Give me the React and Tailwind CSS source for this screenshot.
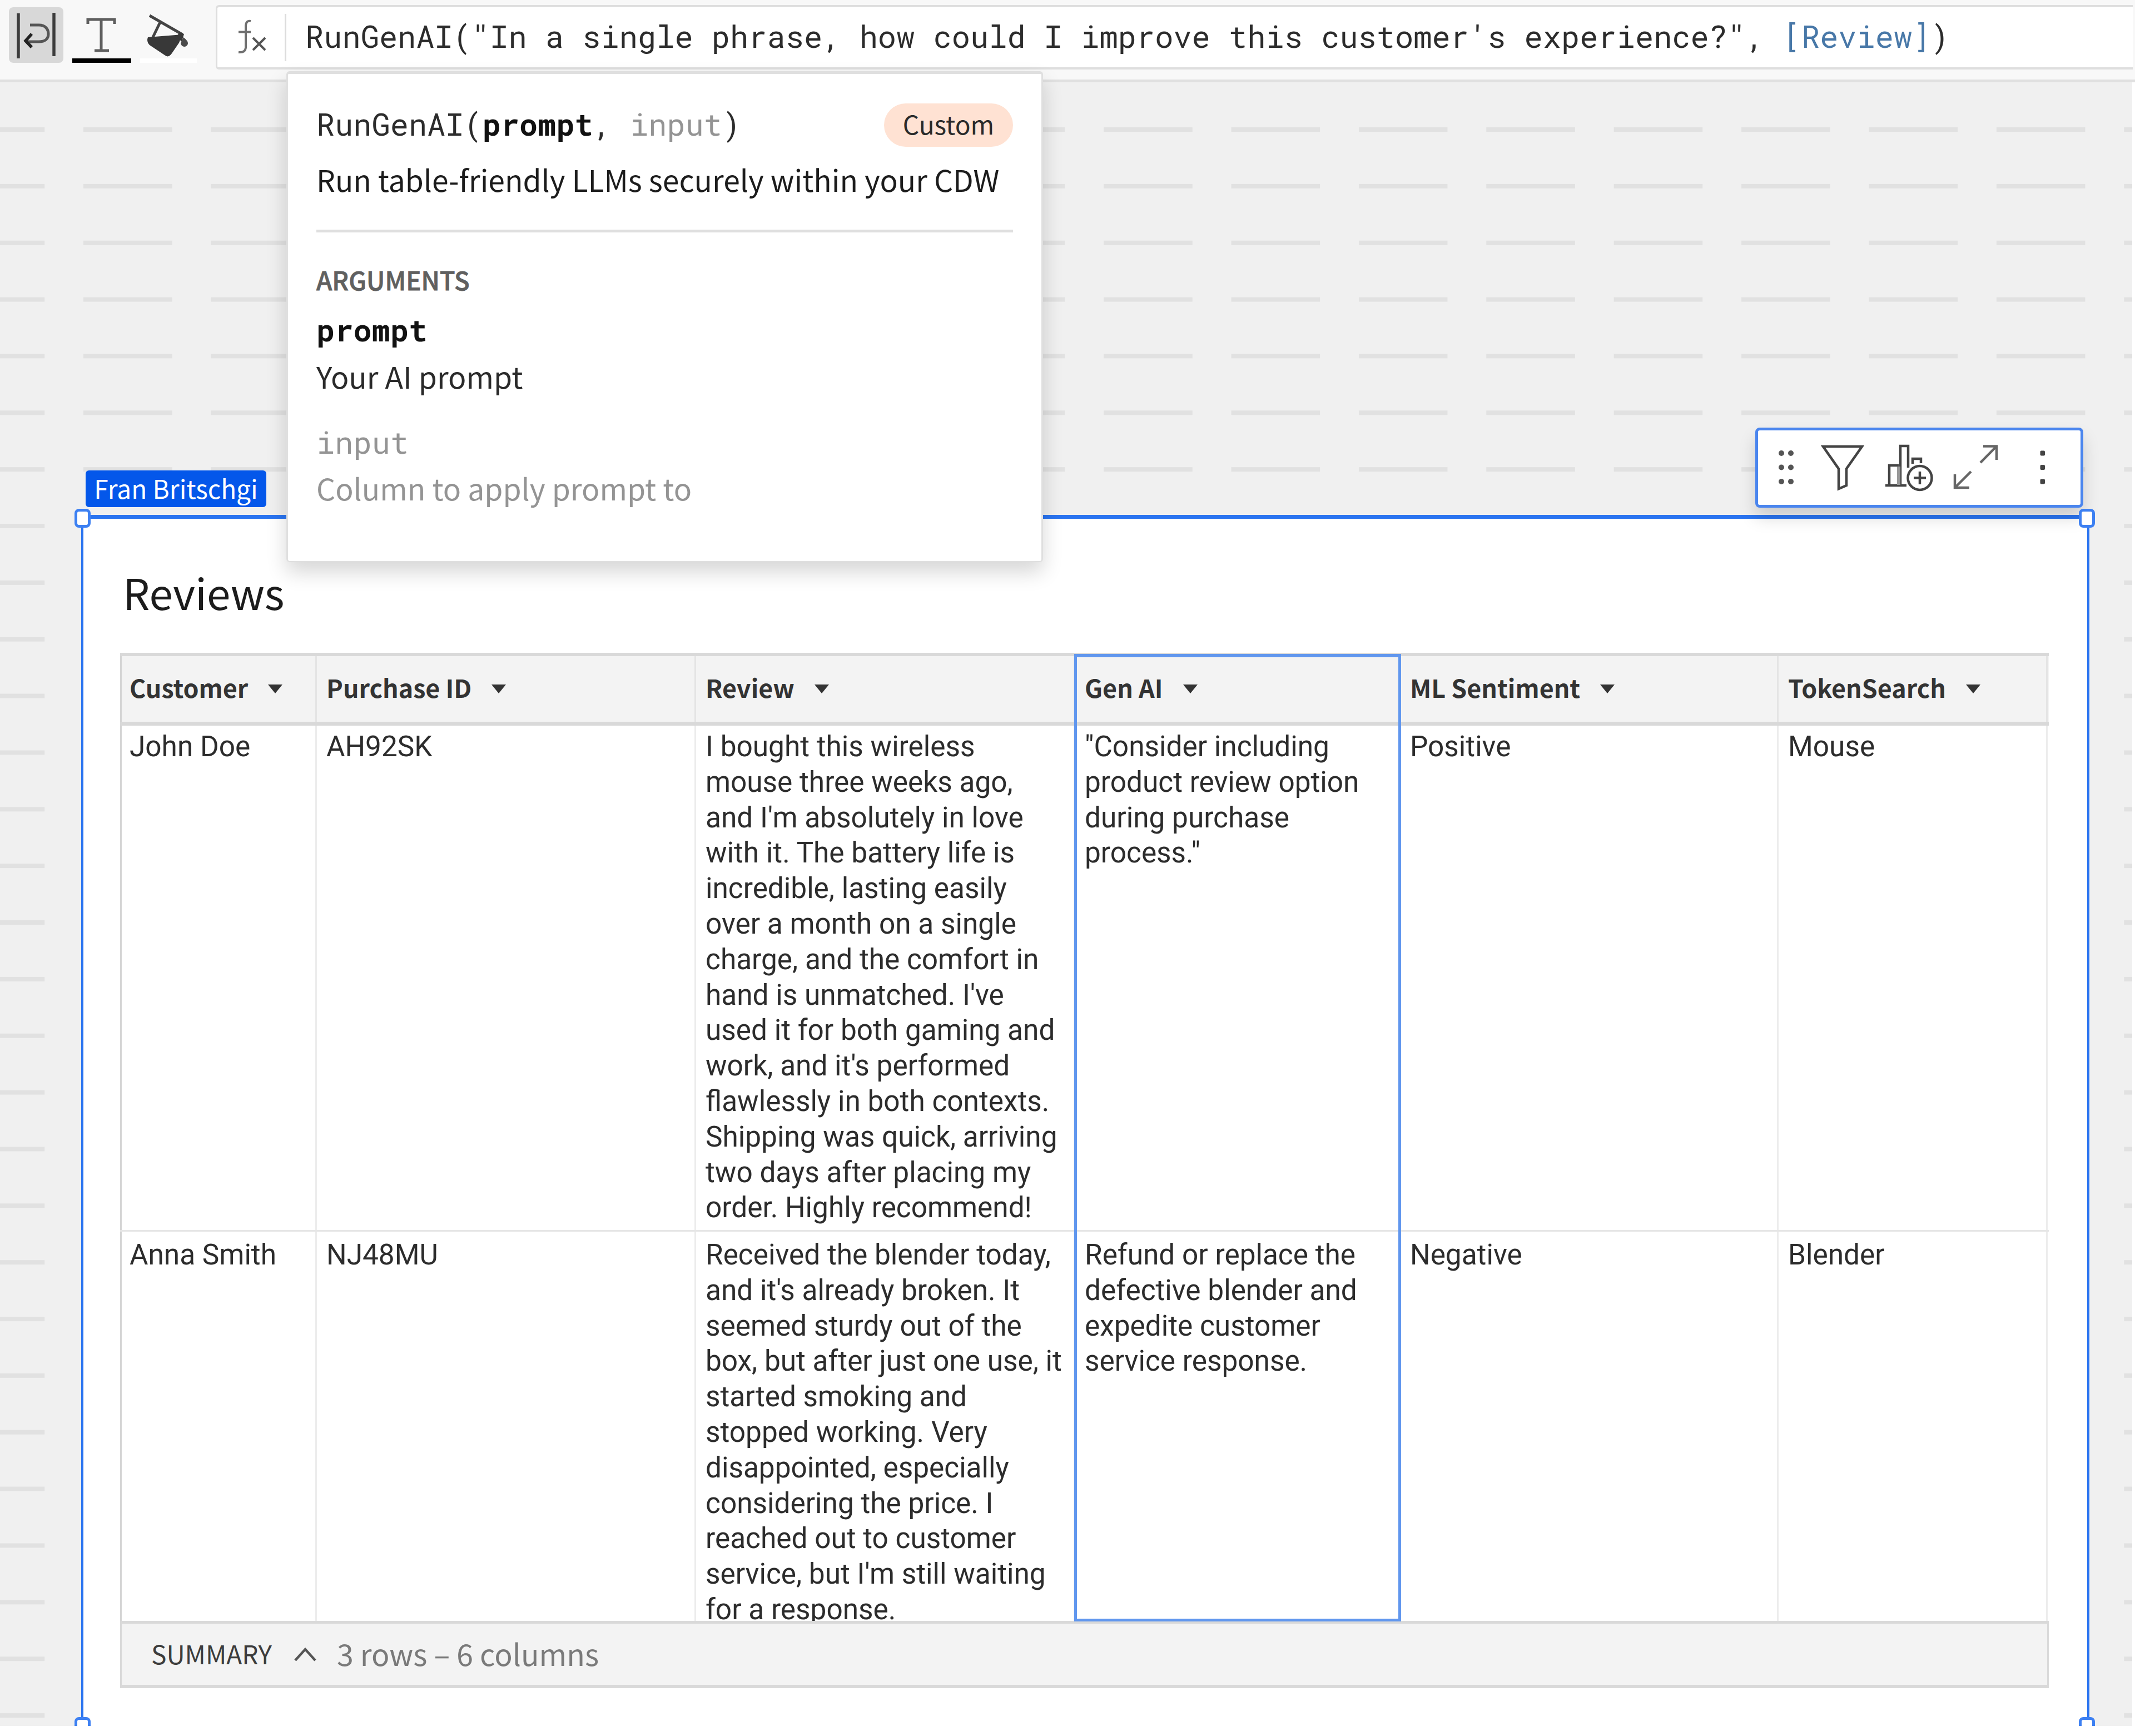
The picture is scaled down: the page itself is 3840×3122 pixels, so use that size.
const SANS = "font-['Noto_Sans_CJK_SC','Open_Sans',sans-serif]";
const MONO = "font-['Roboto_Mono','DejaVu_Sans_Mono',monospace]";
const CELL = "font-['Roboto','Liberation_Sans',sans-serif]";

const COLUMNS = ["Customer", "Purchase ID", "Review", "Gen AI", "ML Sentiment", "TokenSearch"];

const ROWS = [
  [
    ["John Doe"],
    ["AH92SK"],
    [
      "I bought this wireless",
      "mouse three weeks ago,",
      "and I'm absolutely in love",
      "with it. The battery life is",
      "incredible, lasting easily",
      "over a month on a single",
      "charge, and the comfort in",
      "hand is unmatched. I've",
      "used it for both gaming and",
      "work, and it's performed",
      "flawlessly in both contexts.",
      "Shipping was quick, arriving",
      "two days after placing my",
      "order. Highly recommend!",
    ],
    ["\"Consider including", "product review option", "during purchase", "process.\""],
    ["Positive"],
    ["Mouse"],
  ],
  [
    ["Anna Smith"],
    ["NJ48MU"],
    [
      "Received the blender today,",
      "and it's already broken. It",
      "seemed sturdy out of the",
      "box, but after just one use, it",
      "started smoking and",
      "stopped working. Very",
      "disappointed, especially",
      "considering the price. I",
      "reached out to customer",
      "service, but I'm still waiting",
      "for a response.",
    ],
    ["Refund or replace the", "defective blender and", "expedite customer", "service response."],
    ["Negative"],
    ["Blender"],
  ],
];

const GRID = "grid grid-cols-[354px_682px_682px_585px_680px_484px]";

function WrapIcon() {
  return (
    <svg width="98" height="100" viewBox="0 0 98 100" fill="none" stroke="#3c3c3c" strokeWidth="5.5">
      <path d="M17 11V92M81 10V88" />
      <path d="M38 32H54C66 32 71 40 71 48C71 57 65 62 54 62H32" strokeWidth="5" stroke="#555" />
      <path d="M41 48L30 60.500L41 72" stroke="#222" />
    </svg>
  );
}

function TextColorIcon() {
  return (
    <div className="flex h-full w-[106px] flex-col justify-between">
      <svg width="106" height="90" viewBox="0 0 106 90" fill="none" stroke="#5f5f5f" strokeWidth="5">
        <path d="M28 30V22H76V30M52 22V78M40 78H66" />
      </svg>
      <div className="h-2 bg-black" />
    </div>
  );
}

function FillIcon() {
  return (
    <div className="flex h-full w-[102px] flex-col justify-between">
      <svg width="102" height="91" viewBox="0 0 102 91" fill="none" stroke="#444" strokeWidth="5">
        <path d="M17 15L76 49M36 27L22 56" />
        <path d="M14 54L76 49L70 64L57 83Q51 92 44 86L17 68Q11 62 14 54Z" fill="#383838" stroke="none" />
        <path d="M70 45L79 48L75 62L66 54Z" fill="#383838" stroke="none" />
        <path d="M78 54Q87 61 86 66Q84 71 79 71Q74 70 73 65Q75 60 78 54Z" fill="#4a4a4a" stroke="none" />
      </svg>
      <div className="h-2 bg-white" />
    </div>
  );
}

function Toolbar() {
  return (
    <div className={"flex h-[148px] border-b-[5px] border-[#e0e0e0] bg-[#f8f8f8] " + SANS}>
      <div className="mt-[13px] ml-4 flex h-[100px]">
        <div className="rounded-lg bg-[#d8d8d8]">
          <WrapIcon />
        </div>
        <div className="ml-4">
          <TextColorIcon />
        </div>
        <div className="ml-4">
          <FillIcon />
        </div>
      </div>
      <div className="mt-[9px] mr-[4px] ml-[34px] flex h-[116px] flex-1 items-center rounded-l-md border-y-4 border-l-[3px] border-[#dedede] bg-white">
        <div className="flex w-[121px] justify-center">
          <svg width="56" height="66" viewBox="0 0 56 66" fill="none" stroke="#555" strokeWidth="4">
            <path d="M27 4Q19 2 18 12V52Q17 61 5 60M5 23.500H27" stroke="#707070" />
            <path d="M31 34L53 56M53 34L31 56" />
          </svg>
        </div>
        <div className="h-[85px] w-[3px] bg-[#dcdcdc]" />
        <div className={"ml-[34px] pb-1 text-[55.370px] leading-[80px] whitespace-pre text-[#2c2c2c] " + MONO}>
          RunGenAI("In a single phrase, how could I improve this customer's experience?", <span className="text-[#4878a8]">[Review]</span>)
        </div>
      </div>
    </div>
  );
}

function FunctionHelp() {
  return (
    <div
      className={
        "absolute top-[128px] left-[515px] h-[883px] w-[1361px] rounded-md border-x-[3px] border-t-[5px] border-b-2 border-[#dfdfdf] bg-white px-[51px] pt-[53px] shadow-[0_18px_36px_rgba(0,0,0,0.16)] " +
        SANS
      }
    >
      <div className="flex h-[78px] items-center justify-between">
        <div className={"pb-[3px] text-[55.300px] whitespace-pre text-[#2c2c2c] " + MONO}>
          RunGenAI(<span className="font-bold text-[#111]">prompt</span>, <span className="text-[#949494]">input</span>)
        </div>
        <div className="flex h-[78px] w-[232px] items-center justify-center rounded-full bg-[#ffe2d3] pb-1.5 text-[46px] text-[#2a2a2a]">
          Custom
        </div>
      </div>
      <div className="mt-[18px] text-[53.400px] leading-[80px] whitespace-nowrap text-[#1c1c1c]">
        Run table-friendly LLMs securely within your CDW
      </div>
      <div className="mt-[51px] h-[5px] bg-[#dfdfdf]" />
      <div className="mt-[54px] text-[45.500px] leading-[60px] font-medium text-[#606060] [-webkit-text-stroke:0.800px_#606060]">ARGUMENTS</div>
      <div className={"mt-[26px] text-[55.400px] leading-[70px] font-bold text-[#111] " + MONO}>prompt</div>
      <div className="mt-2 text-[53.500px] leading-[80px] text-[#2a2a2a]">Your AI prompt</div>
      <div className={"mt-11 text-[55.400px] leading-[70px] text-[#949494] " + MONO}>input</div>
      <div className="mt-[7px] text-[53.500px] leading-[80px] text-[#949494]">Column to apply prompt to</div>
    </div>
  );
}

function ElementActions() {
  return (
    <div className="absolute -top-[164px] right-[7px] flex h-[144px] w-[590px] rounded-lg border-[5px] border-[#4a85ee] bg-white shadow-[0_18px_30px_rgba(0,0,0,0.15)]">
      <svg width="580" height="134" viewBox="3161 774 580 134" fill="none" stroke="#444" strokeWidth="4.500">
        <g fill="#555" stroke="none">
          <circle cx="3203" cy="815" r="5" />
          <circle cx="3220" cy="815" r="5" />
          <circle cx="3203" cy="840.500" r="5" />
          <circle cx="3220" cy="840.500" r="5" />
          <circle cx="3203" cy="866" r="5" />
          <circle cx="3220" cy="866" r="5" />
        </g>
        <path d="M3278 803H3348L3320 843V873L3306 879V843Z" />
        <path d="M3390 873H3428M3397 873V837H3414M3417 873V802H3431V841M3439 834V825H3454V833" />
        <path d="M3411 839H3417V872H3411Z" fill="#999" stroke="none" />
        <circle cx="3452" cy="859.500" r="21.500" />
        <path d="M3452 848V871M3441 859.500H3463" />
        <g stroke="#666">
          <path d="M3566 802.500H3590V827M3590 802.500L3561 832" />
          <path d="M3515 853V877H3541M3515 877L3544 848" />
        </g>
        <g fill="#444" stroke="none">
          <rect x="3668.500" y="810.500" width="8.500" height="9" rx="2" />
          <rect x="3668.500" y="836" width="8.500" height="9" rx="2" />
          <rect x="3668.500" y="861.500" width="8.500" height="9" rx="2" />
        </g>
      </svg>
    </div>
  );
}

function ReviewsTable() {
  return (
    <div className="relative mt-[60px] ml-[66px] w-[3469px]">
      <div className={"h-[131px] border-t-[6px] border-b-[7px] border-[#d9d9d9] bg-[#f3f3f3] " + GRID}>
        {COLUMNS.map((name) => (
          <div
            key={name}
            className={"flex items-center gap-[34px] border-r-[3px] border-[#e4e4e4] pl-[17px] text-[44.800px] font-bold text-[#333] first:border-l-[3px] first:border-l-[#d5d5d5] first:pl-[14px] " + SANS}
          >
            <span className="pb-[7px] leading-[60px] whitespace-nowrap">{name}</span>
            <svg width="30" height="18" viewBox="0 0 30 18">
              <path d="M2 1H28L15 17Z" fill="#333" />
            </svg>
          </div>
        ))}
      </div>
      <div className="h-[1610px] overflow-hidden">
        {ROWS.map((row, i) => (
          <div key={i} className={"h-[910px] border-b-[3px] border-[#e6e6e6] text-[#2c2c2c] " + GRID}>
            {row.map((lines, j) => (
              <div
                key={j}
                className={
                  "border-r-[3px] border-[#ececec] pl-[17px] text-[51.350px] leading-[63.800px] whitespace-nowrap first:border-l-[3px] first:border-l-[#d5d5d5] first:pl-[14px] " +
                  (i === 0 ? "pt-[6px] " : "pt-[10px] ") +
                  CELL
                }
              >
                {lines.map((line) => (
                  <div key={line}>{line}</div>
                ))}
              </div>
            ))}
          </div>
        ))}
      </div>
      <div className="absolute top-[2px] left-[1716px] h-[1740px] w-[588px] border-x-[5px] border-t-[6px] border-b-[5px] border-[#6197ee]" />
      <div className={"flex h-[121px] items-center border-x-[3px] border-t-[5px] border-b-[6px] border-[#d9d9d9] bg-[#f3f3f3] pl-[53px] whitespace-nowrap " + SANS}>
        <span className="pb-1 text-[46px] text-[#3c3c3c]">SUMMARY</span>
        <svg className="ml-[38px]" width="44" height="28" viewBox="0 0 44 28" fill="none" stroke="#555" strokeWidth="4.500">
          <path d="M4 25L22 5L40 25" />
        </svg>
        <span className="ml-[35px] pb-[3px] text-[53.700px] text-[#7a7a7a]">3 rows – 6 columns</span>
      </div>
    </div>
  );
}

const HANDLE = "absolute h-[34px] w-[29px] rounded-lg border-[5px] border-[#3d80f2] bg-white";

function TableElement() {
  return (
    <div className="relative h-[2400px] w-[3612px] border-x-4 border-t-[7px] border-[#2a74f0] bg-white">
      <div className={"pt-[81px] pl-[71px] text-[76.300px] leading-[100px] text-[#1c1c1c] " + SANS}>Reviews</div>
      <ReviewsTable />
      <div className={"absolute -top-[87px] left-[4px] flex h-[66px] w-[325px] items-center justify-center rounded-md bg-[#0457ea] pb-[3px] text-[46px] whitespace-nowrap text-white " + SANS}>
        Fran Britschgi
      </div>
      <ElementActions />
      <div className={HANDLE + " -top-[18px] -left-[16px]"} />
      <div className={HANDLE + " -top-[18px] -right-[14px]"} />
      <div className={HANDLE + " top-[2155px] -left-[16px]"} />
      <div className={HANDLE + " top-[2155px] -right-[14px]"} />
    </div>
  );
}

export default function App() {
  return (
    <div className="relative h-[3122px] w-[3840px] overflow-hidden bg-white">
      <Toolbar />
      <div className="h-[2956px] w-[3835px] overflow-hidden bg-[#f0f0f0] bg-[linear-gradient(to_bottom,transparent_8px,#f0f0f0_8px),linear-gradient(to_right,#e1e1e1_160px,transparent_160px)] bg-[size:100%_101.870px,229.400px_100%] bg-[position:0_81px,150px_0] pt-[778px] pl-[146px]">
        <TableElement />
      </div>
      <FunctionHelp />
    </div>
  );
}
